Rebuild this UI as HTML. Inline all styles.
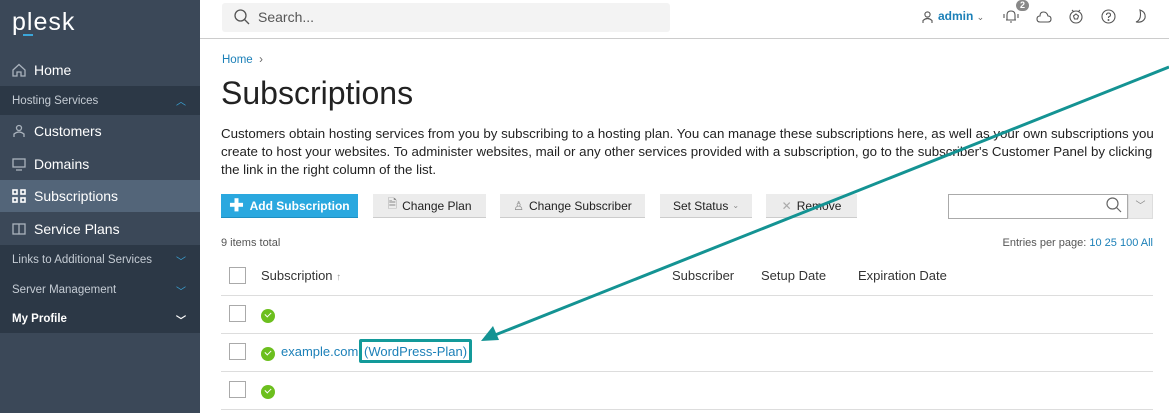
<!DOCTYPE html>
<html><head><meta charset="utf-8"><style>
*{box-sizing:border-box;margin:0;padding:0}
body{width:1169px;height:413px;overflow:hidden;font-family:"Liberation Sans",sans-serif;background:#fff;position:relative;color:#222}
.sb{position:absolute;left:0;top:0;width:200px;height:413px;background:#3b4858}
.it{position:absolute;left:0;width:200px;color:#fff;font-size:14px;display:flex;align-items:center;padding-left:12px}
.it svg{margin-right:8px}
.grp{position:absolute;left:0;width:200px;background:#2c3846;color:#c5ccd4;font-size:11.5px;padding-left:12px;display:flex;align-items:center}
.grp .ch{position:absolute;right:14px;color:#3ba6d9;font-size:10px}
.a{color:#1c80b8}
.btn{position:absolute;top:194px;height:24px;background:#ececec;border-bottom:1px solid #ccc;font-size:12px;display:flex;align-items:center;justify-content:center;color:#222;white-space:nowrap}
.cb{position:absolute;width:17px;height:17px;border:1px solid #aaa;background:#fff;left:229px}
.ok{position:absolute;left:261px;width:14px;height:14px;border-radius:50%;background:#6cbf1e}
.ok:after{content:"";position:absolute;left:4px;top:3px;width:5px;height:3px;border-left:1.5px solid #fff;border-bottom:1.5px solid #fff;transform:rotate(-45deg)}
.ln{position:absolute;left:221px;width:932px;height:1px;background:#ddd}
.hd{position:absolute;top:268px;font-size:13px;color:#333}
</style></head><body>
<div class="sb">
<div style="position:absolute;left:12px;top:8px;color:#fff;font-size:25px;letter-spacing:1px">plesk</div>
<div style="position:absolute;left:23px;top:34px;width:10px;height:2px;background:#3ba6d9"></div>
<div class="it" style="top:53px;height:33px"><svg width="14" height="14" viewBox="0 0 14 14" fill="none" stroke="#aab3bd" stroke-width="1.3"><path d="M1 7L7 1.5 13 7V13H9V9H5V13H1Z"/></svg>Home</div>
<div class="grp" style="top:86px;height:29px">Hosting Services<span class="ch">︿</span></div>
<div class="it" style="top:115px;height:32px"><svg width="14" height="14" viewBox="0 0 14 14" fill="none" stroke="#aab3bd" stroke-width="1.3"><circle cx="7" cy="4" r="2.5"/><path d="M2 13V10Q7 6 12 10V13"/></svg>Customers</div>
<div class="it" style="top:147px;height:33px"><svg width="14" height="14" viewBox="0 0 14 14" fill="none" stroke="#aab3bd" stroke-width="1.3"><rect x="1" y="2" width="12" height="8"/><path d="M4 13H10"/></svg>Domains</div>
<div class="it" style="top:180px;height:32px;background:#536579"><svg width="14" height="14" viewBox="0 0 14 14" fill="none" stroke="#fff" stroke-width="1.6"><rect x="1" y="1" width="4" height="4"/><rect x="9" y="1" width="4" height="4"/><rect x="1" y="9" width="4" height="4"/><rect x="9" y="9" width="4" height="4"/></svg>Subscriptions</div>
<div class="it" style="top:212px;height:33px"><svg width="14" height="14" viewBox="0 0 14 14" fill="none" stroke="#aab3bd" stroke-width="1.3"><rect x="1" y="2" width="12" height="10"/><path d="M7 2V12"/></svg>Service Plans</div>
<div class="grp" style="top:245px;height:30px">Links to Additional Services<span class="ch">﹀</span></div>
<div class="grp" style="top:275px;height:30px">Server Management<span class="ch">﹀</span></div>
<div class="grp" style="top:305px;height:28px;color:#fff;font-weight:bold">My Profile<span class="ch" style="color:#fff">﹀</span></div>
</div>
<div style="position:absolute;left:200px;top:0;width:969px;height:39px;border-bottom:1px solid #ccc;background:#fff"></div>
<div style="position:absolute;left:222px;top:3px;width:448px;height:29px;background:#f3f3f3;border-radius:3px;font-size:14px;color:#555;padding:6px 0 0 36px">Search...</div>
<svg style="position:absolute;left:234px;top:9px" width="16" height="17" viewBox="0 0 16 17" fill="none" stroke="#555" stroke-width="1.3"><circle cx="6.5" cy="6.5" r="5.5"/><path d="M10.5 10.5L15 15"/></svg>
<svg style="position:absolute;left:922px;top:11px" width="11" height="12" viewBox="0 0 11 12" fill="none" stroke="#555" stroke-width="1.1"><circle cx="5.5" cy="3.5" r="2.6"/><path d="M1 12V9.5Q5.5 5.5 10 9.5V12"/></svg>
<div style="position:absolute;left:938px;top:9px;font-size:12px;color:#1c80b8;font-weight:bold">admin <span style="color:#666;font-weight:normal;font-size:9px">⌄</span></div>
<svg style="position:absolute;left:1003px;top:9px" width="16" height="14" viewBox="0 0 16 14" fill="none" stroke="#555" stroke-width="1.1"><path d="M4 11V6Q4 2 8 2Q12 2 12 6V11ZM3 11H13M7 13H9M1 5V9M15 5V9"/></svg>
<div style="position:absolute;left:1016px;top:0;width:13px;height:11px;border-radius:6px;background:#888;color:#fff;font-size:9px;font-weight:bold;text-align:center;line-height:11px">2</div>
<svg style="position:absolute;left:1036px;top:11px" width="16" height="12" viewBox="0 0 16 12" fill="none" stroke="#555" stroke-width="1.1"><path d="M4 11H12Q15 11 15 8Q15 5 12 5Q11 1 7.5 1Q4 1 4 5Q1 5 1 8Q1 11 4 11Z"/></svg>
<svg style="position:absolute;left:1069px;top:9px" width="14" height="15" viewBox="0 0 14 15" fill="none" stroke="#555" stroke-width="1.1"><circle cx="7" cy="8" r="6"/><path d="M7 5L9.5 7 8.5 10H5.5L4.5 7Z"/><path d="M3 1L5 3M11 1L9 3"/></svg>
<svg style="position:absolute;left:1101px;top:9px" width="15" height="15" viewBox="0 0 15 15" fill="none" stroke="#555" stroke-width="1.1"><circle cx="7.5" cy="7.5" r="6.5"/><path d="M5.5 6Q5.5 4 7.5 4Q9.5 4 9.5 6Q9.5 7.3 7.5 8V9"/><circle cx="7.5" cy="11" r=".4"/></svg>
<svg style="position:absolute;left:1135px;top:9px" width="12" height="15" viewBox="0 0 12 15" fill="none" stroke="#555" stroke-width="1.1"><path d="M5 1Q11 3 10 9Q8 14 1 13Q7 11 5 1Z"/></svg>

<div style="position:absolute;left:222px;top:54px;font-size:11.5px" class="a">Home <span style="color:#666">&nbsp;›</span></div>
<div style="position:absolute;left:221px;top:75px;font-size:32px;color:#222">Subscriptions</div>
<div style="position:absolute;left:221px;top:125px;width:935px;font-size:13.3px;line-height:18px;color:#222">Customers obtain hosting services from you by subscribing to a hosting plan. You can manage these subscriptions here, as well as your own subscriptions you create to host your websites. To administer websites, mail or any other services provided with a subscription, go to the subscriber's Customer Panel by clicking the link in the right column of the list.</div>

<div class="btn" style="left:221px;width:137px;background:#2aa8df;border-bottom:1px solid #1e8fc2;color:#fff;font-weight:bold"><span style="font-size:17px;margin-right:6px">✚</span>Add Subscription</div>
<div class="btn" style="left:373px;width:113px"><span style="color:#888;margin-right:5px">🗎</span>Change Plan</div>
<div class="btn" style="left:500px;width:145px"><span style="color:#888;margin-right:5px">♙</span>Change Subscriber</div>
<div class="btn" style="left:660px;width:92px">Set Status <span style="color:#888;font-size:8px;margin-left:4px">⌄</span></div>
<div class="btn" style="left:766px;width:91px"><span style="color:#aaa;margin-right:5px">✕</span>Remove</div>
<div style="position:absolute;left:948px;top:194px;width:180px;height:25px;border:1px solid #aaa;background:#fff"></div>
<svg style="position:absolute;left:1106px;top:197px" width="16" height="17" viewBox="0 0 16 17" fill="none" stroke="#666" stroke-width="1.2"><circle cx="6.5" cy="6.5" r="5.5"/><path d="M10.5 10.5L15 15"/></svg>
<div style="position:absolute;left:1128px;top:194px;width:25px;height:25px;background:#ececec;border:1px solid #ddd;color:#888;text-align:center;font-size:10px;line-height:23px">﹀</div>

<div style="position:absolute;left:221px;top:237px;font-size:11px;color:#555">9 items total</div>
<div style="position:absolute;right:16px;top:237px;font-size:11px;color:#555">Entries per page: <span class="a">10 25 100 All</span></div>

<div class="cb" style="top:267px"></div>
<div class="hd" style="left:261px">Subscription <span style="color:#999;font-size:10px">↑</span></div>
<div class="hd" style="left:672px">Subscriber</div>
<div class="hd" style="left:761px">Setup Date</div>
<div class="hd" style="left:858px">Expiration Date</div>
<div class="ln" style="top:295px"></div>
<div class="cb" style="top:305px"></div><div class="ok" style="top:309px"></div>
<div class="ln" style="top:333px"></div>
<div class="cb" style="top:343px"></div><div class="ok" style="top:347px"></div>
<div style="position:absolute;left:281px;top:344px;font-size:13px" class="a">example.com</div>
<div style="position:absolute;left:359px;top:339px;width:113px;height:24px;border:3px solid #139a9a;border-radius:2px;font-size:13px;padding:2px 0 0 2px" class="a">(WordPress-Plan)</div>
<div class="ln" style="top:371px"></div>
<div class="cb" style="top:381px"></div><div class="ok" style="top:385px"></div>
<div class="ln" style="top:409px"></div>

<svg style="position:absolute;left:0;top:0" width="1169" height="413"><line x1="1169" y1="67" x2="490" y2="337" stroke="#149393" stroke-width="3"/><path d="M481 341L493 326 499 340Z" fill="#149393"/></svg>
</body></html>
